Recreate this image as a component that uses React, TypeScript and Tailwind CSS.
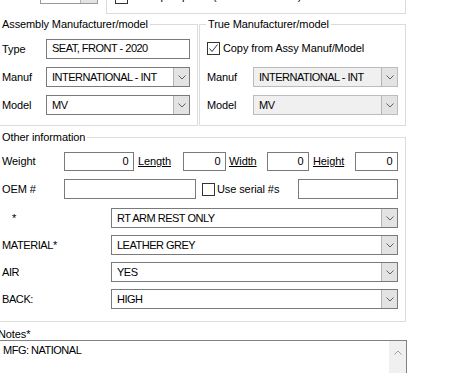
import React from "react";

function Chevron({ up = false, color = "#606060" }: { up?: boolean; color?: string }) {
  return (
    <svg width="8" height="5" viewBox="0 0 8 5">
      <path
        d={up ? "M0.5 4.5 L4 1 L7.5 4.5" : "M0.5 0.5 L4 4 L7.5 0.5"}
        stroke={color}
        strokeWidth="1"
        fill="none"
      />
    </svg>
  );
}

function Combo({ value, className, disabled = false }: { value: string; className: string; disabled?: boolean }) {
  return (
    <div
      className={
        "flex h-[20px] border " +
        (disabled ? "border-[#bcbcbc] bg-[#f0f0f0] " : "border-[#7a7a7a] bg-white ") +
        className
      }
    >
      <div className="flex-1 overflow-hidden whitespace-nowrap pl-[5px] leading-[18px] tracking-[-0.5px]">{value}</div>
      <div className="flex w-[16px] items-center justify-center border-l border-[#b4b4b4] bg-[#e3e3e3]">
        <Chevron />
      </div>
    </div>
  );
}

function Input({ value = "", className, right = false }: { value?: string; className: string; right?: boolean }) {
  return (
    <div
      className={
        "overflow-hidden whitespace-nowrap border border-[#7a7a7a] bg-white leading-[17px] tracking-[-0.5px] " +
        (right ? "pr-[5px] text-right " : "pl-[5px] ") +
        className
      }
    >
      {value}
    </div>
  );
}

function CheckBox({ checked = false, className = "" }: { checked?: boolean; className?: string }) {
  return (
    <div className={"h-[13px] w-[13px] shrink-0 border border-[#333333] bg-white " + className}>
      {checked && (
        <svg width="11" height="11" viewBox="0 0 11 11">
          <path d="M1.5 5.5 L4 8.5 L9.5 1.5" stroke="#333333" strokeWidth="1" fill="none" />
        </svg>
      )}
    </div>
  );
}

export default function App() {
  return (
    <div className="h-[373px] w-[449px] overflow-hidden bg-white font-['Liberation_Sans',Arial,sans-serif] text-[11px] leading-[13px] tracking-[-0.1px] text-black">
      {/* top strip (cut off window content) */}
      <div className="flex h-[14px]">
        <div className="ml-[40px] mt-[-16px] flex h-[20px] w-[58px] justify-end border border-[#9a9a9a]">
          <div className="h-full w-[17px] border-l border-[#b4b4b4] bg-[#e3e3e3]" />
        </div>
        <div className="ml-[8px] flex h-[14px] w-[300px] border-b border-l border-r border-[#dcdcdc]">
          <CheckBox className="ml-[8px] mt-[-9px]" />
          <span className="ml-[3px] mt-[-10px] whitespace-nowrap">Make part public (show on the web)</span>
        </div>
      </div>

      {/* manufacturer groups */}
      <div className="mt-[4px] flex">
        <fieldset className="m-0 ml-[-6px] h-[108px] w-[204px] min-w-0 border border-[#dcdcdc] p-0">
          <legend className="ml-[5px] px-[2px] leading-[13px]">Assembly Manufacturer/model</legend>
          <div className="flex flex-col gap-[8px] pl-[7px] pt-[8px]">
            <div className="flex h-[20px] items-center">
              <span className="w-[44px]">Type</span>
              <Input value="SEAT, FRONT - 2020" className="h-[20px] w-[144px]" />
            </div>
            <div className="flex h-[20px] items-center">
              <span className="w-[44px]">Manuf</span>
              <Combo value="INTERNATIONAL - INT" className="w-[144px]" />
            </div>
            <div className="flex h-[20px] items-center">
              <span className="w-[44px]">Model</span>
              <Combo value="MV" className="w-[144px]" />
            </div>
          </div>
        </fieldset>
        <fieldset className="m-0 ml-[1px] h-[108px] w-[207px] min-w-0 border border-[#dcdcdc] p-0">
          <legend className="ml-[6px] px-[2px] leading-[13px]">True Manufacturer/model</legend>
          <div className="flex flex-col pl-[7px] pt-[11px]">
            <div className="flex h-[13px] items-center">
              <CheckBox checked />
              <span className="ml-[3px] whitespace-nowrap">Copy from Assy Manuf/Model</span>
            </div>
            <div className="mt-[12px] flex h-[20px] items-center">
              <span className="w-[46px]">Manuf</span>
              <Combo value="INTERNATIONAL - INT" className="w-[145px]" disabled />
            </div>
            <div className="mt-[8px] flex h-[20px] items-center">
              <span className="w-[46px]">Model</span>
              <Combo value="MV" className="w-[145px]" disabled />
            </div>
          </div>
        </fieldset>
      </div>

      {/* other information */}
      <fieldset className="m-0 ml-[-6px] mt-[5px] h-[191px] w-[412px] min-w-0 border border-[#dcdcdc] p-0">
        <legend className="ml-[5px] px-[2px] leading-[13px]">Other information</legend>
        <div className="flex flex-col pl-[7px] pt-[8px]">
          <div className="flex h-[19px] items-center">
            <span className="w-[62px]">Weight</span>
            <Input value="0" right className="h-[19px] w-[70px]" />
            <span className="ml-[4px] w-[45px] underline">Length</span>
            <Input value="0" right className="h-[19px] w-[43px]" />
            <span className="ml-[3px] w-[38px] underline">Width</span>
            <Input value="0" right className="h-[19px] w-[42px]" />
            <span className="ml-[4px] w-[42px] underline">Height</span>
            <Input value="0" right className="h-[19px] w-[43px]" />
          </div>
          <div className="mt-[8px] flex h-[20px] items-center">
            <span className="w-[62px]">OEM #</span>
            <Input className="h-[20px] w-[132px]" />
            <CheckBox className="ml-[6px]" />
            <span className="ml-[2px] w-[81px] whitespace-nowrap">Use serial #s</span>
            <Input className="h-[20px] w-[100px]" />
          </div>
          <div className="mt-[9px] flex h-[20px] items-center">
            <span className="w-[109px] pl-[10px]">*</span>
            <Combo value="RT ARM REST ONLY" className="w-[287px]" />
          </div>
          <div className="mt-[7px] flex h-[20px] items-center">
            <span className="w-[109px] tracking-[-0.4px]">MATERIAL*</span>
            <Combo value="LEATHER GREY" className="w-[287px]" />
          </div>
          <div className="mt-[7px] flex h-[20px] items-center">
            <span className="w-[109px] tracking-[-0.4px]">AIR</span>
            <Combo value="YES" className="w-[287px]" />
          </div>
          <div className="mt-[7px] flex h-[20px] items-center">
            <span className="w-[109px] tracking-[-0.4px]">BACK:</span>
            <Combo value="HIGH" className="w-[287px]" />
          </div>
        </div>
      </fieldset>

      {/* notes */}
      <div className="ml-[-2px] mt-[6px] h-[12px] leading-[12px]">Notes*</div>
      <div className="ml-[-3px] flex h-[60px] w-[410px] border border-[#828282] bg-white">
        <div className="flex-1 whitespace-nowrap pl-[5px] pt-[3px] tracking-[-0.5px]">MFG: NATIONAL</div>
        <div className="flex w-[17px] justify-center bg-[#f0f0f0] pt-[9px]">
          <div className="h-[5px]">
            <Chevron up color="#a0a0a0" />
          </div>
        </div>
      </div>
    </div>
  );
}
